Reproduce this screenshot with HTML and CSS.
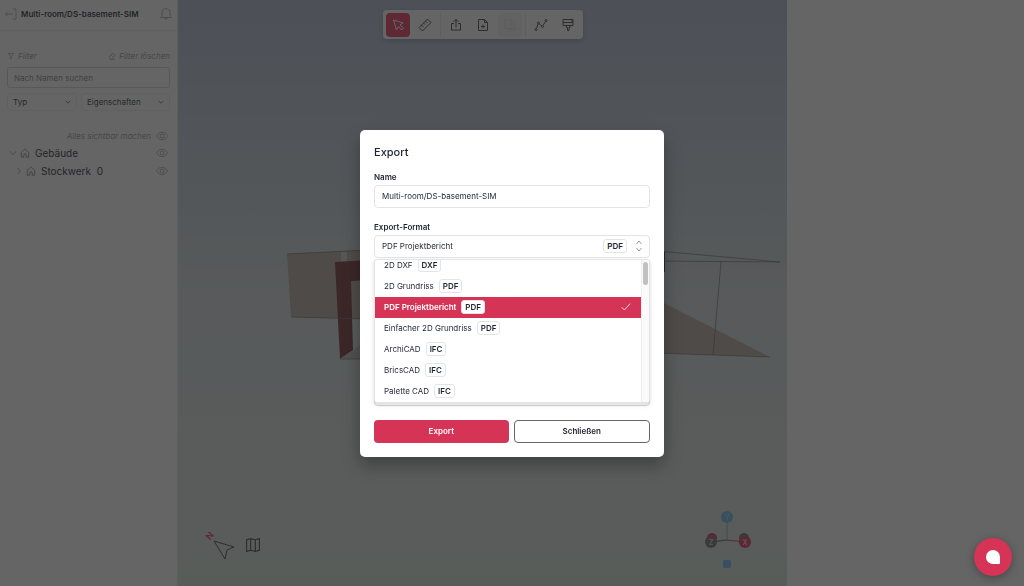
FILE: index.html
```html
<!DOCTYPE html>
<html lang="de">
<head>
    <meta charset="UTF-8">
    <meta name="viewport" content="width=device-width, initial-scale=1.0">
    <title>Multi-room/DS-basement-SIM</title>
    <link rel="stylesheet" href="styles.css">
</head>
<body>
    <svg class="sprite" aria-hidden="true">
        <symbol id="eye" viewBox="0 0 24 24"><path d="M1 12s4-7.500 11-7.500S23 12 23 12s-4 7.500-11 7.500S1 12 1 12z"/><circle cx="12" cy="12" r="4"/></symbol>
        <symbol id="home" viewBox="0 0 24 24"><path d="M3 10.500 12 2l9 8.500V22h-6v-5a3 3 0 0 0-6 0v5H3z"/></symbol>
        <symbol id="chevron" viewBox="0 0 24 24"><path d="m3 7 9 10 9-10"/></symbol>
    </svg>

    <div class="app">
        <aside class="sidebar">
            <header class="project">
                <button class="icon-button" aria-label="Zurück">
                    <svg class="icon" viewBox="0 0 24 24"><path d="M15 2h7v20h-7M16 12H1M6 7l-5 5 5 5"/></svg>
                </button>
                <h1>Multi-room/DS-basement-SIM</h1>
                <button class="icon-button bell" aria-label="Benachrichtigungen">
                    <svg class="icon" viewBox="0 0 24 24"><path d="M1 19h22c-2-2-3-4-3-7V9a8 8 0 0 0-16 0v3c0 3-1 5-3 7zM9 19a3 3 0 0 0 6 0"/></svg>
                </button>
            </header>

            <section class="filters">
                <div class="filter-head">
                    <span><svg class="icon small" viewBox="0 0 24 24"><path d="M2 4h20M6 4l4 9v8l4-2v-6l4-9"/></svg>Filter</span>
                    <button class="clear"><svg class="icon small" viewBox="0 0 24 24"><path d="m3 15 11-12 8 7-11 12H7zM9 9l8 7M7 22h14"/></svg>Filter löschen</button>
                </div>
                <input class="search" type="text" placeholder="Nach Namen suchen" aria-label="Nach Namen suchen">
                <div class="filter-row">
                    <label class="picker picker-type">
                        <select aria-label="Typ"><option>Typ</option></select>
                        <svg class="icon"><use href="#chevron"/></svg>
                    </label>
                    <label class="picker picker-props">
                        <select aria-label="Eigenschaften"><option>Eigenschaften</option></select>
                        <svg class="icon"><use href="#chevron"/></svg>
                    </label>
                </div>
            </section>

            <section class="tree">
                <button class="show-all">Alles sichtbar machen <svg class="icon eye"><use href="#eye"/></svg></button>
                <div class="node">
                    <svg class="icon arrow"><use href="#chevron"/></svg>
                    <svg class="icon home"><use href="#home"/></svg>
                    <span>Gebäude</span>
                    <button class="icon-button" aria-label="Gebäude sichtbar"><svg class="icon eye"><use href="#eye"/></svg></button>
                </div>
                <div class="node child">
                    <svg class="icon arrow closed"><use href="#chevron"/></svg>
                    <svg class="icon home"><use href="#home"/></svg>
                    <span>Stockwerk&nbsp; 0</span>
                    <button class="icon-button" aria-label="Stockwerk 0 sichtbar"><svg class="icon eye"><use href="#eye"/></svg></button>
                </div>
            </section>
        </aside>

        <main class="viewer">
            <svg class="scene" viewBox="0 0 609 586" preserveAspectRatio="xMidYMid slice">
                <!-- left wall and door frame -->
                <path class="wall" d="M109 254 L190 250 V319 L113 317z"/>
                <path class="glass" d="M163 252h6v10h-6z"/>
                <path class="door" d="M157 262 L190 260 V280 L173 281 L175 350 L162 359z"/>
                <path class="floor" d="M162 359 L175 350 L190 339 V359z"/>
                <path class="edge" d="M109 254 L190 250 M113 317 L190 319 M162 359 H190"/>
                <!-- right wall outline and floor -->
                <path class="wall" d="M480 300 L592 357 L480 353z"/>
                <path class="edge" d="M480 251 L602 262 M480 261 L602 262 M543 262 L535 355 M480 353 L592 357"/>
                <path class="post" d="M486 252v20"/>
            </svg>

            <nav class="toolbar">
                <button class="tool active" aria-label="Auswählen"><svg class="icon" viewBox="0 0 24 24"><path d="m3 2 6 20 4-7 6 7 4-4-7-6 6-4z"/></svg></button>
                <button class="tool" aria-label="Messen"><svg class="icon" viewBox="0 0 24 24"><path d="M0 17 17 0l7 7L7 24zM13 4l4 4M9 8l3 3M5 12l4 4"/></svg></button>
                <span class="separator"></span>
                <button class="tool" aria-label="Exportieren"><svg class="icon" viewBox="0 0 24 24"><path d="M8 9H3v13h18V9h-5M12 16V1M7 6l5-5 5 5"/></svg></button>
                <button class="tool" aria-label="Neue Datei"><svg class="icon" viewBox="0 0 24 24"><path d="M3 1h12l6 6v16H3zM15 1v6h6M12 11v8M8 15h8"/></svg></button>
                <button class="tool" aria-label="Kopieren" disabled><svg class="icon" viewBox="0 0 24 24"><path d="M2 2h14v17H2zM9 22h13V8"/></svg></button>
                <span class="separator"></span>
                <button class="tool" aria-label="Linie"><svg class="icon" viewBox="0 0 24 24"><circle cx="2" cy="21" r="2"/><circle cx="7" cy="8" r="2"/><circle cx="15" cy="15" r="2"/><circle cx="22" cy="3" r="2"/><path d="m3 19 3-9M9 10l4 4M16 13l5-8"/></svg></button>
                <button class="tool" aria-label="Malen"><svg class="icon" viewBox="0 0 24 24"><path d="M2 1h20v12H2zM2 7h20M20 1v6M9 13v4h2v6h3v-6h2v-4"/></svg></button>
            </nav>

            <div class="view-tools">
                <svg class="compass" viewBox="0 0 32 30"><text x="6" y="9" transform="rotate(-50 6 6)">N</text><path d="m10 11 20 6-7 3-2 9z"/></svg>
                <button class="icon-button" aria-label="Karte"><svg class="icon map" viewBox="0 0 24 24"><path d="m1 3 7-2 8 2 7-2v20l-7 2-8-2-7 2zM8 1v20M16 3v20"/></svg></button>
            </div>

            <svg class="gizmo" viewBox="0 0 48 60">
                <path class="axis-y" d="M23 8v22"/>
                <path class="axis-z" d="m7 32 16-2"/>
                <path class="axis-x" d="m23 30 18 2"/>
                <circle class="fill-x" cx="8" cy="28" r="5"/>
                <circle class="fill-z" cx="40" cy="28" r="5"/>
                <circle class="fill-y" cx="23" cy="7" r="6"/>
                <circle class="fill-z" cx="7" cy="32" r="6"/>
                <circle class="fill-x" cx="41" cy="32" r="6"/>
                <rect class="fill-y" x="19" y="50" width="8" height="8" rx="2"/>
                <text x="23" y="10">Y</text>
                <text x="7" y="35">Z</text>
                <text x="41" y="35">X</text>
            </svg>
        </main>

        <aside class="details"></aside>
    </div>

    <div class="overlay">
        <form class="modal" role="dialog" aria-labelledby="modalTitle">
            <h2 id="modalTitle">Export</h2>

            <label for="exportName">Name</label>
            <input class="field" type="text" id="exportName" value="Multi-room/DS-basement-SIM">

            <label for="exportFormat">Export-Format</label>
            <div class="format">
                <select class="field" id="exportFormat"><option>PDF Projektbericht</option></select>
                <div class="format-end">
                    <span class="badge">PDF</span>
                    <svg class="icon updown" viewBox="0 0 12 24"><path d="m1 8 5-6 5 6M1 16l5 6 5-6"/></svg>
                </div>
                <div class="dropdown">
                    <ul role="listbox" aria-label="Export-Format">
                        <li role="option">2D DXF <span class="badge">DXF</span></li>
                        <li role="option">2D Grundriss <span class="badge">PDF</span></li>
                        <li role="option" class="selected" aria-selected="true">PDF Projektbericht <span class="badge">PDF</span>
                            <svg class="icon check" viewBox="0 0 24 24"><path d="m2 13 6 6L22 4"/></svg>
                        </li>
                        <li role="option">Einfacher 2D Grundriss <span class="badge">PDF</span></li>
                        <li role="option">ArchiCAD <span class="badge">IFC</span></li>
                        <li role="option">BricsCAD <span class="badge">IFC</span></li>
                        <li role="option">Palette CAD <span class="badge">IFC</span></li>
                    </ul>
                    <div class="scrollbar"><div class="thumb"></div></div>
                </div>
            </div>

            <div class="options"></div>

            <div class="actions">
                <button type="submit" class="primary">Export</button>
                <button type="button" class="secondary">Schließen</button>
            </div>
        </form>
    </div>

    <button class="chat" aria-label="Chat"><span class="bubble"></span></button>
</body>
</html>
```

FILE: styles.css
```css
* {
    box-sizing: border-box;
}
body {
    margin: 0;
    font-family: Inter, sans-serif;
    font-size: 8px;
    line-height: 14px;
    color: #1f2430;
    background: #fff;
}
h1, h2, ul {
    margin: 0;
    padding: 0;
}
button, input, select {
    font: inherit;
    color: inherit;
    margin: 0;
}
button {
    padding: 0;
    border: none;
    background: none;
    cursor: pointer;
}
select {
    appearance: none;
}
.sprite {
    display: none;
}
.icon {
    width: 12px;
    height: 12px;
    flex: none;
    fill: none;
    stroke: currentColor;
    stroke-width: 2;
    overflow: visible;
}
.icon-button {
    display: flex;
}

/* page */
.app {
    display: flex;
    min-height: 100vh;
}
.sidebar {
    width: 178px;
    flex: none;
    border-right: 1px solid #e4e7ec;
}
.details {
    width: 237px;
    flex: none;
}
.project {
    display: flex;
    align-items: center;
    gap: 4px;
    height: 31px;
    padding: 0 5px 2px 5px;
    border-bottom: 1px solid #e8eaee;
}
.project h1 {
    flex: 1;
    font-size: 8px;
    font-weight: 600;
    white-space: nowrap;
}
.project .icon {
    color: #666;
    stroke-width: 1;
}

/* filters */
.filters {
    padding: 18px 7px 0;
}
.filter-head {
    display: flex;
    justify-content: space-between;
    margin-bottom: 4px;
    font-style: italic;
    color: #999;
}
.filter-head .icon {
    margin-right: 3px;
}
.filter-head .small {
    width: 8px;
    height: 8px;
    vertical-align: -1px;
}
.search {
    display: block;
    width: 100%;
    height: 21px;
    padding: 0 6px;
    border: 1px solid #d0d3d8;
    border-radius: 3px;
    background: none;
}
.search::placeholder {
    color: #888;
}
.filter-row {
    display: flex;
    gap: 4px;
    margin-top: 5px;
}
.picker {
    position: relative;
    display: flex;
    flex: 1;
}
.picker-type {
    flex: 0 0 70px;
}
.picker select {
    width: 100%;
    height: 18px;
    padding: 0 5px;
    border: 1px solid #eceef1;
    border-radius: 3px;
    background: none;
    color: #333;
}
.picker .icon {
    position: absolute;
    right: 6px;
    top: 6px;
    width: 6px;
    height: 6px;
    stroke-width: 3;
    color: #555;
    pointer-events: none;
}

/* tree */
.tree {
    padding: 18px 9px 0;
}
.show-all {
    display: flex;
    align-items: center;
    gap: 5px;
    margin-left: auto;
    font-style: italic;
    color: #999;
}
.tree .eye {
    color: #666;
    stroke-width: 1;
}
.node {
    display: flex;
    align-items: center;
    gap: 3px;
    height: 18px;
    margin-top: 1px;
    font-size: 10px;
}
.node + .node {
    margin-top: 0;
}
.node.child {
    padding-left: 6px;
}
.node span {
    flex: 1;
    padding-left: 2px;
}
.node .home {
    width: 10px;
    height: 10px;
    color: #777;
}
.node .arrow {
    width: 8px;
    height: 8px;
    color: #777;
}
.node .closed {
    transform: rotate(-90deg);
}

/* 3d view */
.viewer {
    position: relative;
    flex: 1;
    display: flex;
    flex-direction: column;
    align-items: center;
    padding-top: 10px;
    background: linear-gradient(#acbad0 0%, #bcc8d6 22%, #d2dadd 50%, #d6dfdc 75%, #d4dfd8 100%);
}
.scene {
    position: absolute;
    inset: 0;
    width: 100%;
    height: 100%;
}
.wall {
    fill: #b4a8a0;
}
.glass {
    fill: #ccd2d4;
}
.door {
    fill: #743030;
}
.floor {
    fill: #bcbab8;
}
.edge {
    fill: none;
    stroke: #6e6a68;
    stroke-opacity: 0.7;
}
.post {
    stroke: #333;
    stroke-width: 2;
}
.toolbar {
    position: relative;
    display: flex;
    align-items: center;
    gap: 3px;
    height: 29px;
    padding: 0 3px;
    border-radius: 4px;
    background: #fff;
    box-shadow: 0 2px 5px rgba(0, 0, 0, 0.2);
}
.tool {
    display: flex;
    align-items: center;
    justify-content: center;
    width: 24px;
    height: 24px;
    border-radius: 4px;
    color: #444;
}
.tool.active {
    background: #e8355c;
    color: #fff;
}
.tool:disabled {
    background: #f4f4f4;
    color: #ddd;
}
.separator {
    width: 1px;
    height: 24px;
    background: #e6e6e6;
}
.view-tools {
    position: absolute;
    left: 26px;
    bottom: 26px;
    display: flex;
    align-items: center;
    gap: 10px;
}
.compass {
    width: 32px;
    height: 30px;
    fill: none;
    stroke: #444;
}
.compass text {
    fill: #e8355c;
    stroke: none;
    font-size: 9px;
    font-weight: 700;
    text-anchor: middle;
}
.view-tools .map {
    width: 14px;
    height: 14px;
    color: #444;
}
.gizmo {
    position: absolute;
    right: 35px;
    bottom: 16px;
    width: 48px;
    height: 60px;
    font-size: 7px;
    font-weight: 700;
    text-anchor: middle;
}
.gizmo text {
    fill: #ccc;
}
.fill-x {
    fill: #e02c54;
}
.fill-y {
    fill: #64b4e6;
}
.fill-z {
    fill: #6e6e6e;
}
.axis-x {
    stroke: #e02c54;
}
.axis-y {
    stroke: #64b4e6;
}
.axis-z {
    stroke: #555;
}

/* export dialog */
.overlay {
    position: fixed;
    inset: 0;
    display: flex;
    align-items: center;
    justify-content: center;
    background: rgba(36, 36, 36, 0.7);
}
.modal {
    width: 304px;
    padding: 14px;
    border-radius: 5px;
    background: #fff;
    box-shadow: 0 8px 18px rgba(0, 0, 0, 0.3);
}
.modal h2 {
    margin-bottom: 10px;
    font-size: 11px;
    line-height: 16px;
    font-weight: 500;
}
.modal label {
    display: block;
    margin-bottom: 1px;
    font-weight: 600;
}
.field {
    display: block;
    width: 100%;
    height: 23px;
    padding: 0 7px;
    border: 1px solid #e2e4e8;
    border-radius: 4px;
    background: #fff;
}
input.field {
    margin-bottom: 12px;
}
.format {
    position: relative;
}
.format-end {
    position: absolute;
    top: 0;
    right: 8px;
    height: 23px;
    display: flex;
    align-items: center;
    gap: 9px;
    pointer-events: none;
}
.badge {
    padding: 0 3px;
    border: 1px solid #e2e4e8;
    border-radius: 3px;
    background: #fff;
    font-weight: 600;
    line-height: 12px;
    color: #1f2430;
}
.updown {
    width: 6px;
    height: 12px;
    color: #999;
}
.dropdown {
    position: absolute;
    top: 24px;
    left: 0;
    right: 0;
    display: flex;
    height: 144px;
    border: 1px solid #e2e4e8;
    border-radius: 3px;
    background: #fff;
    box-shadow: 0 2px 4px rgba(0, 0, 0, 0.15);
    overflow: hidden;
}
.dropdown ul {
    flex: 1;
    display: flex;
    flex-direction: column;
    justify-content: flex-end;
    list-style: none;
}
.dropdown li {
    display: flex;
    flex: none;
    align-items: center;
    gap: 5px;
    height: 21px;
    padding: 0 10px 0 9px;
}
.dropdown .selected {
    background: #d63456;
    color: #fff;
    font-weight: 600;
}
.check {
    width: 10px;
    height: 10px;
    margin-left: auto;
}
.scrollbar {
    width: 8px;
    padding: 2px 1px;
    border-left: 1px solid #eee;
    background: #fafafa;
}
.thumb {
    width: 5px;
    height: 23px;
    border-radius: 3px;
    background: #c1c1c1;
}
.options {
    height: 136px;
    margin: 12px 0 14px;
    border: 1px solid #d5d7db;
    border-radius: 4px;
}
.actions {
    display: flex;
    gap: 5px;
}
.actions button {
    flex: 1;
    height: 23px;
    border-radius: 4px;
    font-weight: 600;
}
.actions .primary {
    background: #d63456;
    color: #fff;
}
.actions .secondary {
    border: 1px solid #666;
}

.chat {
    position: fixed;
    right: 12px;
    bottom: 10px;
    display: flex;
    align-items: center;
    justify-content: center;
    width: 38px;
    height: 38px;
    border-radius: 50%;
    background: #d63456;
    box-shadow: 0 2px 8px rgba(0, 0, 0, 0.3);
}
.bubble {
    width: 14px;
    height: 14px;
    border-radius: 7px 7px 1px 7px;
    background: #fff;
}
```
